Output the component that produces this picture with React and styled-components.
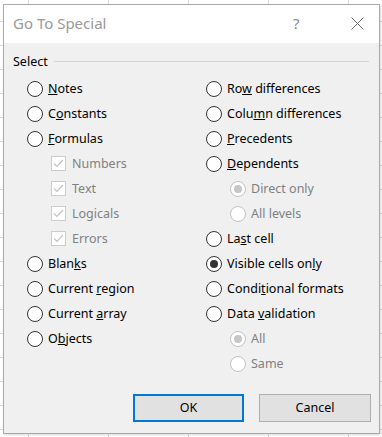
import React from 'react'
import styled, { createGlobalStyle } from 'styled-components'

const GlobalStyle = createGlobalStyle`
  html, body {
    margin: 0;
    padding: 0;
  }
  body {
    width: 382px;
    height: 437px;
    overflow: hidden;
    font-family: 'Noto Sans', 'Liberation Sans', sans-serif;
    background-color: #ffffff;
    background-image:
      linear-gradient(to right, #dadada 1px, transparent 1px),
      linear-gradient(to bottom, #dadada 1px, transparent 1px);
    background-size: 80px 24px;
    background-position: 28px 21px;
  }
`

const leftOptions = [
  { label: 'Notes', key: 0 },
  { label: 'Constants', key: 1 },
  { label: 'Formulas', key: 0 },
  { label: 'Numbers', check: true },
  { label: 'Text', check: true },
  { label: 'Logicals', check: true },
  { label: 'Errors', check: true },
  { label: 'Blanks', key: 4 },
  { label: 'Current region', key: 8 },
  { label: 'Current array', key: 8 },
  { label: 'Objects', key: 1 },
]

const rightOptions = [
  { label: 'Row differences', key: 2 },
  { label: 'Column differences', key: 4 },
  { label: 'Precedents', key: 0 },
  { label: 'Dependents', key: 0 },
  { label: 'Direct only', sub: true, checked: true },
  { label: 'All levels', sub: true },
  { label: 'Last cell', key: 2 },
  { label: 'Visible cells only', key: 16, checked: true },
  { label: 'Conditional formats', key: 5 },
  { label: 'Data validation', key: 5 },
  { label: 'All', sub: true, checked: true },
  { label: 'Same', sub: true },
]

function Label({ text, k }) {
  if (k === undefined) return <span>{text}</span>
  return (
    <span>
      {text.slice(0, k)}
      <u>{text[k]}</u>
      {text.slice(k + 1)}
    </span>
  )
}

function Option({ opt }) {
  if (opt.check) {
    return (
      <Row indent>
        <CheckBox>
          <svg width="11" height="9" viewBox="0 0 11 9">
            <path d="M1 4.5 L4 7.5 L10 1" fill="none" stroke="#c4c4c4" strokeWidth="1.2" />
          </svg>
        </CheckBox>
        <Text disabled>
          <Label text={opt.label} />
        </Text>
      </Row>
    )
  }
  return (
    <Row indent={opt.sub}>
      <Radio disabled={opt.sub} checked={opt.checked} />
      <Text disabled={opt.sub}>
        <Label text={opt.label} k={opt.key} />
      </Text>
    </Row>
  )
}

export default function App() {
  return (
    <>
      <GlobalStyle />
      <Dialog>
        <TitleBar>
          <Title>Go To Special</Title>
          <Help>?</Help>
          <Close>
            <svg width="13" height="13" viewBox="0 0 13 13">
              <path d="M0.5 0.5 L12.5 12.5 M12.5 0.5 L0.5 12.5" stroke="#6a6a6a" strokeWidth="1" />
            </svg>
          </Close>
        </TitleBar>
        <Body>
          <GroupHeader>
            <span>Select</span>
            <Rule />
          </GroupHeader>
          <Columns>
            <Column>
              {leftOptions.map(o => (
                <Option key={o.label} opt={o} />
              ))}
            </Column>
            <Column>
              {rightOptions.map(o => (
                <Option key={o.label} opt={o} />
              ))}
            </Column>
          </Columns>
          <Buttons>
            <Button primary>OK</Button>
            <Button>Cancel</Button>
          </Buttons>
        </Body>
      </Dialog>
    </>
  )
}

const Dialog = styled.div`
  margin: 4px 0 0 3px;
  width: 375px;
  height: 428px;
  border: 1px solid #a9a9a9;
  background: #f0f0f0;
  box-shadow: 1px 1px 2px rgba(0, 0, 0, 0.15);
  display: flex;
  flex-direction: column;
`

const TitleBar = styled.div`
  height: 38px;
  background: #ffffff;
  display: flex;
  align-items: center;
  padding: 0 0 0 9px;
`

const Title = styled.div`
  flex: 1;
  font-size: 15px;
  color: #9a9a9a;
  padding-bottom: 2px;
`

const Help = styled.div`
  font-size: 15px;
  color: #8a8a8a;
  width: 58px;
  padding-bottom: 2px;
`

const Close = styled.div`
  width: 28px;
  display: flex;
  align-items: center;
  padding-bottom: 1px;
`

const Body = styled.div`
  flex: 1;
  display: flex;
  flex-direction: column;
  padding: 10px 8px 0 9px;
  font-size: 12.5px;
  color: #000;
`

const GroupHeader = styled.div`
  display: flex;
  align-items: center;
  gap: 6px;
  height: 16px;
  font-size: 12.5px;
`

const Rule = styled.div`
  flex: 1;
  height: 1px;
  background: #d5d5d5;
  margin-right: 2px;
`

const Columns = styled.div`
  display: grid;
  grid-template-columns: 179px 1fr;
  padding: 7px 0 0 14px;
`

const Column = styled.div`
  display: flex;
  flex-direction: column;
`

const Row = styled.div`
  height: 25px;
  display: flex;
  align-items: center;
  padding-left: ${p => (p.indent ? '24px' : '0')};
`

const Radio = styled.span`
  box-sizing: border-box;
  width: 16px;
  height: 16px;
  border-radius: 50%;
  border: 1.3px solid ${p => (p.disabled ? '#c2c2c2' : '#333333')};
  background: #ffffff;
  display: flex;
  align-items: center;
  justify-content: center;
  margin-right: 5px;
  flex-shrink: 0;

  &::after {
    content: '';
    display: ${p => (p.checked ? 'block' : 'none')};
    width: 8px;
    height: 8px;
    border-radius: 50%;
    background: ${p => (p.disabled ? '#c6c6c6' : '#333333')};
  }
`

const CheckBox = styled.span`
  box-sizing: border-box;
  width: 15px;
  height: 15px;
  border: 1px solid #cccccc;
  background: #ffffff;
  display: flex;
  align-items: center;
  justify-content: center;
  margin-right: 6px;
`

const Text = styled.span`
  color: ${p => (p.disabled ? '#808080' : '#000000')};
  white-space: nowrap;
  padding-bottom: 1px;
`

const Buttons = styled.div`
  display: flex;
  justify-content: flex-end;
  gap: 15px;
  margin-top: 18px;
`

const Button = styled.button`
  box-sizing: border-box;
  width: ${p => (p.primary ? '111px' : '112px')};
  height: 28px;
  background: #e1e1e1;
  border: ${p => (p.primary ? '2px solid #0078d7' : '1px solid #adadad')};
  font-family: inherit;
  font-size: 12.5px;
  color: #000;
  padding: 0 0 1px;
`
